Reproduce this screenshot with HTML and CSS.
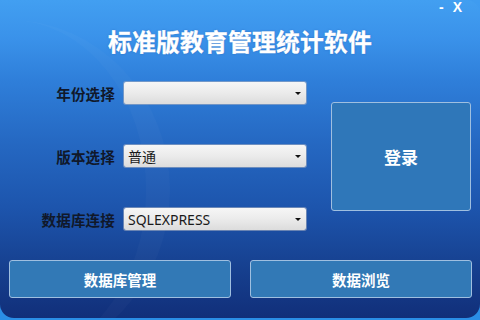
FILE: index.html
```html
<!DOCTYPE html>
<html lang="zh">
<head>
<meta charset="utf-8">
<link rel="stylesheet" href="styles.css">
</head>
<body>
<div class="window">
  <div class="swoosh"></div>
  <div class="titlebar"><span class="ctl">-</span><span class="ctl">X</span></div>
  <h1 class="title">标准版教育管理统计软件</h1>
  <div class="main">
    <div class="form">
      <div class="row">
        <label class="label">年份选择</label>
        <div class="combo"><span class="value"></span><span class="arrow"></span></div>
      </div>
      <div class="row">
        <label class="label">版本选择</label>
        <div class="combo"><span class="value">普通</span><span class="arrow"></span></div>
      </div>
      <div class="row">
        <label class="label">数据库连接</label>
        <div class="combo"><span class="value">SQLEXPRESS</span><span class="arrow"></span></div>
      </div>
    </div>
    <button class="btn login">登录</button>
  </div>
  <div class="bottom">
    <button class="btn wide">数据库管理</button>
    <button class="btn wide">数据浏览</button>
  </div>
</div>
</body>
</html>
```
FILE: styles.css
```css
* { box-sizing: border-box; }
html, body {
  margin: 0;
  padding: 0;
  width: 480px;
  height: 320px;
  overflow: hidden;
  background: linear-gradient(180deg, #3f9cf0 0%, #2a86e6 70%, #2a8ee6 100%);
  font-family: "Noto Sans CJK SC", "Noto Sans", sans-serif;
}
.window {
  position: relative;
  width: 480px;
  height: 318px;
  border-radius: 0 14px 14px 14px;
  background: linear-gradient(180deg, #429ff1 0%, #3a92ea 12%, #2f7fda 25%, #2568c2 45%, #1d55ad 65%, #163f8e 85%, #112f7a 100%);
  overflow: hidden;
}
.swoosh {
  position: absolute;
  left: -150px;
  top: 20px;
  width: 320px;
  height: 340px;
  border-radius: 50%;
  border-right: 24px solid rgba(255,255,255,0.025);
  pointer-events: none;
}
.titlebar {
  position: relative;
  display: flex;
  justify-content: flex-end;
  gap: 9px;
  height: 14px;
  padding-right: 18px;
  padding-top: 1px;
  font-family: "Liberation Sans", Arial, sans-serif;
  font-weight: bold;
  font-size: 14px;
  line-height: 13px;
  color: #fff;
}
.title {
  position: relative;
  margin: 13px 0 0;
  height: 27px;
  text-align: center;
  font-size: 23.8px;
  line-height: 27px;
  font-weight: bold;
  color: #fff;
  letter-spacing: 0.2px;
  -webkit-text-stroke: 0.3px #fff;
  text-shadow: 0 0 2px rgba(30,80,160,0.6);
}
.main {
  display: flex;
  margin-top: 28px;
  position: relative;
}
.form {
  display: flex;
  flex-direction: column;
  gap: 41px;
  width: 306px;
}
.row {
  display: flex;
  align-items: center;
  height: 22px;
  gap: 9px;
}
.label {
  width: 115px;
  text-align: right;
  font-size: 14.5px;
  font-weight: bold;
  color: #10182a;
  letter-spacing: 0.2px;
}
.combo {
  position: relative;
  width: 182px;
  height: 22px;
  border-radius: 2px;
  background: linear-gradient(180deg, #f6f6f6 0%, #ebebeb 50%, #dcdcdc 100%);
  box-shadow: 0 0 0 1px rgba(160,170,190,0.6);
  display: flex;
  align-items: center;
  padding-left: 4px;
}
.value {
  font-family: "Noto Sans", "Noto Sans CJK SC", sans-serif;
  font-size: 14px;
  color: #1a1a1a;
}
.arrow {
  position: absolute;
  right: 5px;
  top: 10px;
  width: 0;
  height: 0;
  border-left: 3px solid transparent;
  border-right: 3px solid transparent;
  border-top: 3px solid #111;
}
.btn {
  margin: 0;
  padding: 0;
  font-family: "Noto Sans CJK SC", sans-serif;
  font-weight: bold;
  color: #fff;
  background: #3278b8;
  border: 1px solid #9fbfe0;
  border-radius: 3px;
}
.login {
  margin-left: 25px;
  margin-top: 20px;
  width: 140px;
  height: 109px;
  font-size: 17px;
  background: #2f77b9;
}
.bottom {
  position: relative;
  display: flex;
  gap: 19px;
  padding-left: 9px;
  margin-top: 30px;
}
.wide {
  width: 222px;
  height: 38px;
  font-size: 14.5px;
  background: #3279b6;
}
```
